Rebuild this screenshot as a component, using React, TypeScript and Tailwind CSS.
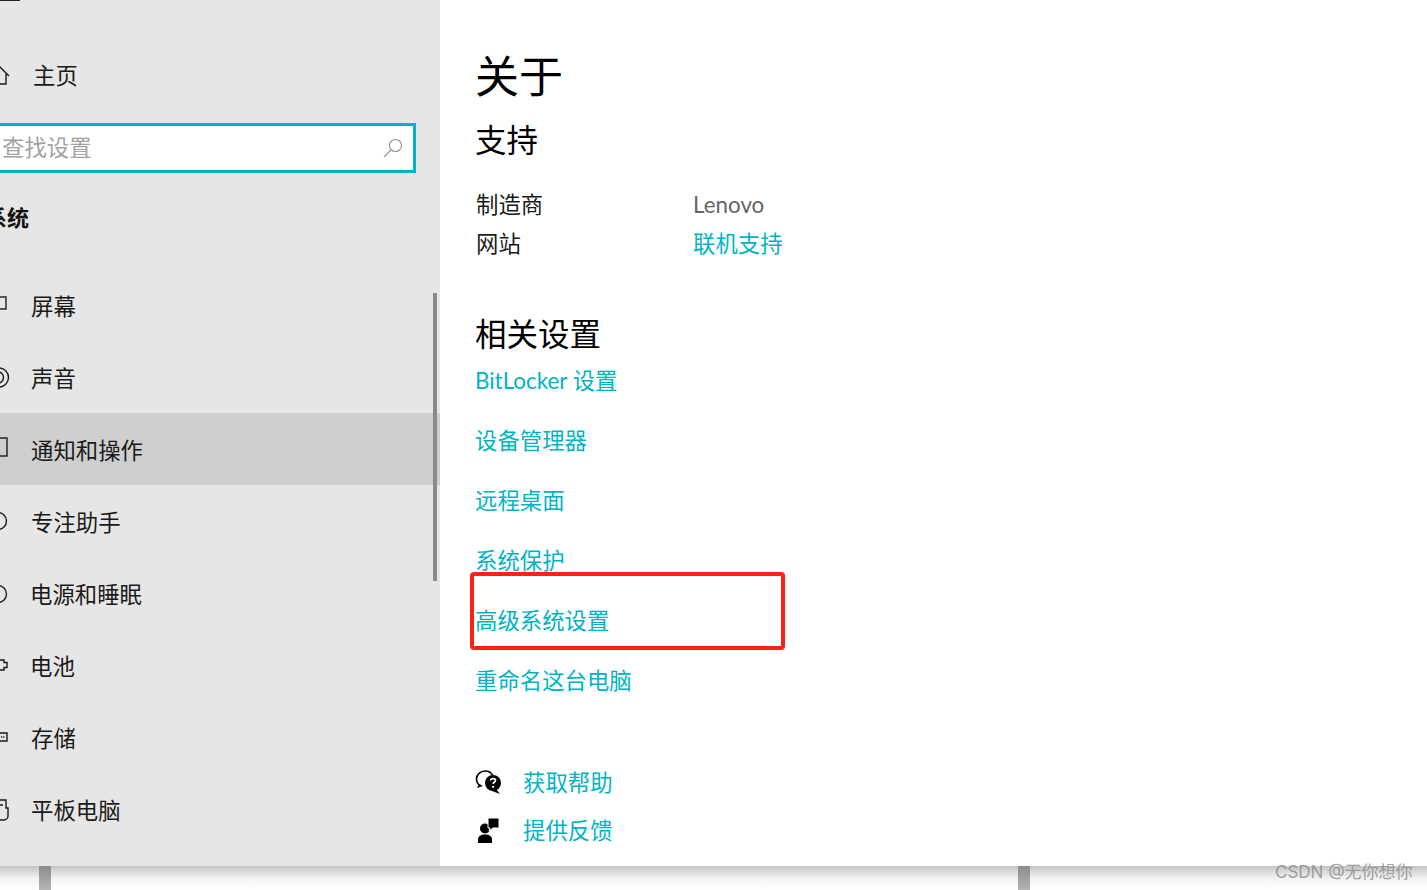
import React from "react";

const FONT = "font-['Lato','Noto_Sans_CJK_SC',sans-serif]";

interface NavItem {
  label: string;
  icon: React.ReactNode;
  active?: boolean;
  shift?: boolean;
}

const stroke = { fill: "none", stroke: "#1a1a1a", strokeWidth: 1.4 };

// the icons are cut off by the left edge of the capture, so only their right ends show
const navItems: NavItem[] = [
  { label: "屏幕", icon: <rect x="-10" y="5" width="16" height="12" {...stroke} /> },
  {
    label: "声音",
    icon: (
      <>
        <path d="M-2 8a5.500 5.500 0 0 1 0 11" {...stroke} />
        <path d="M-1 4a9.500 9.500 0 0 1 0 19" {...stroke} />
      </>
    ),
  },
  { label: "通知和操作", icon: <rect x="-10" y="2" width="17" height="18" {...stroke} />, active: true },
  { label: "专注助手", icon: <circle cx="-2" cy="13" r="8.500" {...stroke} /> },
  { label: "电源和睡眠", icon: <circle cx="-2" cy="14" r="8.500" {...stroke} />, shift: true },
  { label: "电池", icon: <path d="M-2 8h6v2.500h3v5h-3v2.500h-6" {...stroke} />, shift: true },
  {
    label: "存储",
    icon: (
      <>
        <path d="M-2 9h9v8h-9" {...stroke} />
        <path d="M1 13h4" {...stroke} strokeDasharray="1.200 1" />
      </>
    ),
  },
  { label: "平板电脑", icon: <path d="M0 4h6v8h2v8a4 4 0 0 1-4 4h-4M0 9h3" {...stroke} /> },
];

function Sidebar() {
  return (
    <aside className="relative w-[440px] h-[866px] shrink-0 bg-[#e6e6e6] overflow-hidden">
      <div className="h-px w-5 bg-[#222]" />
      <div className="flex items-center h-[47px] mt-[51px] pl-[33px] text-[22.400px] text-[#1a1a1a]">
        <svg className="absolute left-0 top-[66px] overflow-visible" width="10" height="20" viewBox="0 0 10 20">
          <path d="M-9 10l9-9 9 9M6 8v10h-12" {...stroke} />
        </svg>
        主页
      </div>
      <div className="flex items-center justify-between h-[50px] w-[420px] -ml-[4px] mt-[24px] bg-white border-[3px] border-[#00b4c4] pl-[3px] pr-[10px]">
        <span className="text-[22.400px] text-[#a3a3a3]">查找设置</span>
        <svg width="20" height="20" viewBox="0 0 20 20" fill="none" stroke="#8f8f8f" strokeWidth="1.100">
          <circle cx="12.500" cy="7.500" r="6" />
          <path d="M8 12l-7 7" />
        </svg>
      </div>
      <div className="h-[30px] mt-[30px] pl-[7px] text-[22px] leading-[30px] font-bold text-[#111]">
        <span className="-ml-[22px]">系统</span>
      </div>
      <nav className="mt-[36px]">
        {navItems.map((item) => (
          <div
            key={item.label}
            className={`relative flex items-center h-[72px] pt-[3px] text-[22.400px] text-[#1a1a1a] ${item.shift ? "pl-[30px]" : "pl-[31px]"} ${item.active ? "bg-[#cfcfcf]" : ""}`}
          >
            <svg className="absolute left-0 top-[23px] overflow-visible" width="10" height="21" viewBox="0 0 10 21">
              {item.icon}
            </svg>
            {item.label}
          </div>
        ))}
      </nav>
      <div className="absolute left-[433px] top-[293px] w-[4px] h-[288px] bg-[#8a8a8a]" />
    </aside>
  );
}

const links = ["BitLocker 设置", "设备管理器", "远程桌面", "系统保护", "高级系统设置", "重命名这台电脑"];

function Main() {
  return (
    <main className="flex-1 h-[866px] pl-[35px] bg-white">
      <h1 className="mt-[46px] text-[44px] leading-[60px] font-normal text-black">关于</h1>
      <h2 className="mt-[13px] text-[31.500px] leading-[42px] font-normal text-black">支持</h2>
      <dl className="mt-[24px] pl-px text-[22.400px] leading-[39px]">
        <div className="flex">
          <dt className="w-[217px] text-[#1a1a1a]">制造商</dt>
          <dd className="text-[#666]">Lenovo</dd>
        </div>
        <div className="flex">
          <dt className="w-[217px] text-[#1a1a1a]">网站</dt>
          <dd className="text-[#00b4c4]">联机支持</dd>
        </div>
      </dl>
      <h2 className="mt-[50px] text-[31.500px] leading-[42px] font-normal text-black">相关设置</h2>
      <ul className="-mt-[4px] text-[22.400px] leading-[60px] text-[#00b4c4]">
        {links.map((link) => (
          <li key={link} className="h-[60px]">
            {link}
          </li>
        ))}
      </ul>
      <div className="mt-[54px] flex flex-col gap-[12px] text-[22.400px] leading-[36px] text-[#00b4c4]">
        <div className="flex items-center gap-[22px]">
          <svg width="26" height="26" viewBox="0 0 26 26">
            <path d="M5 15.500C2.500 14 1.500 11.500 1.500 9c0-4.500 4-8 8.500-8 3.500 0 6 1.500 7.500 4" fill="none" stroke="#000" strokeWidth="1.600" />
            <path d="M4 14l-2 4 6-2z" fill="#000" />
            <circle cx="18" cy="13" r="8" fill="#000" />
            <path d="M21 19l4 5-8-3z" fill="#000" />
            <path d="M15.500 10.500c.3-2.600 5-2.600 5 0 0 1.800-2.400 1.800-2.400 3.500" fill="none" stroke="#fff" strokeWidth="1.700" />
            <circle cx="18.100" cy="16.800" r="1.100" fill="#fff" />
          </svg>
          获取帮助
        </div>
        <div className="flex items-center gap-[22px]">
          <svg width="26" height="26" viewBox="0 0 26 26">
            <circle cx="10" cy="10.500" r="5" fill="#000" />
            <path d="M3 25v-3.500c0-3 2.500-5 7-5s7 2 7 5v3.500z" fill="#000" />
            <path d="M13 0h11v10h-6l-4 3 1-3h-2z" fill="#000" stroke="#fff" strokeWidth="1" />
          </svg>
          提供反馈
        </div>
      </div>
    </main>
  );
}

export default function App() {
  return (
    <div className={`relative w-[1427px] h-[890px] overflow-hidden bg-white ${FONT}`}>
      <div className="flex">
        <Sidebar />
        <Main />
      </div>
      {/* strip of the window behind the settings window */}
      <div className="relative h-[24px] bg-gradient-to-b from-[#c4c4c4] via-[#f2f2f2] to-white">
        <div className="absolute left-[39px] top-0 w-[12px] h-full bg-gradient-to-b from-[#8c8c8c] to-[#b4b4b4]" />
        <div className="absolute left-[1018px] top-0 w-[12px] h-full bg-gradient-to-b from-[#8c8c8c] to-[#b4b4b4]" />
      </div>
      {/* red annotation box */}
      <div className="absolute left-[470px] top-[572px] w-[315px] h-[78px] border-[4px] border-[#ff2016] rounded-[4px]" />
      {/* watermark */}
      <div className="absolute left-[1275px] top-[860px] font-['Inter','Noto_Sans_CJK_SC',sans-serif] text-[17px] leading-[24px] text-[#8a8a8a]/80 whitespace-nowrap">
        CSDN @无你想你
      </div>
    </div>
  );
}
